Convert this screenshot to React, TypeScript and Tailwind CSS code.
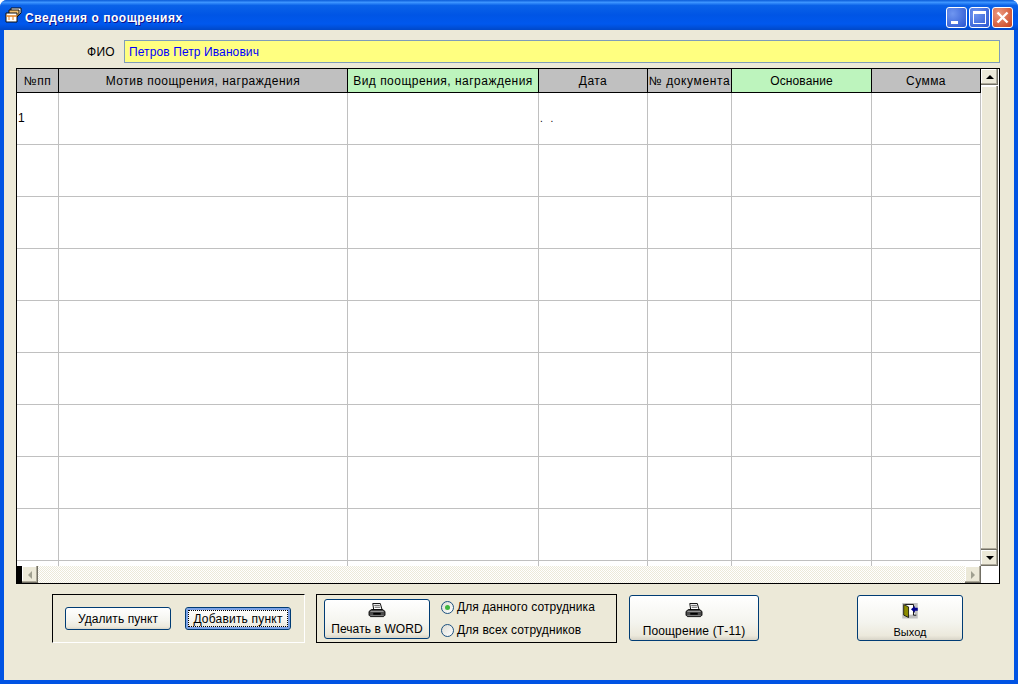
const font = { fontFamily: '"Liberation Sans", Arial, sans-serif' };

const cols = [
  { w: "w-[42px]", title: "№пп", head: "bg-[#c0c0c0]", sp: "tracking-[0.5px]" },
  { w: "w-[289px]", title: "Мотив поощрения, награждения", head: "bg-[#c0c0c0]", sp: "tracking-[0.5px]" },
  { w: "w-[191px]", title: "Вид поощрения, награждения", head: "bg-[#bdf4bd]", sp: "tracking-[0.48px]" },
  { w: "w-[109px]", title: "Дата", head: "bg-[#c0c0c0]", sp: "tracking-[0.45px]" },
  { w: "w-[84px]", title: "№ документа", head: "bg-[#c0c0c0]", sp: "tracking-[0.62px]" },
  { w: "w-[140px]", title: "Основание", head: "bg-[#bdf4bd]", sp: "tracking-[0.1px]" },
  { w: "w-[109px]", title: "Сумма", head: "bg-[#c0c0c0]", sp: "tracking-[0.45px]" },
];

const rows = [52, 52, 52, 52, 52, 52, 52, 52, 52];

function Printer() {
  return (
    <svg width="18" height="16" viewBox="0 0 18 16">
      <path d="M4.5 0.5h8l2 7h-9z" fill="#fff" stroke="#000" strokeWidth="1" />
      <path d="M6 2.5h6M6.5 4.5h6" stroke="#555" strokeWidth="1" />
      <path d="M3 7h12l2.5 2v4l-1.5 1.5H2L0.5 13V9z" fill="#4a4a4a" stroke="#000" strokeWidth="1" />
      <path d="M2 9h14" stroke="#a0a0a0" strokeWidth="1" />
      <rect x="5" y="10.5" width="8" height="2" fill="#000" />
      <path d="M2 13.5h14" stroke="#8a8a8a" strokeWidth="1" />
    </svg>
  );
}

function Door() {
  return (
    <svg width="16" height="16" viewBox="0 0 16 16">
      <rect width="16" height="16" fill="#c0c0c0" />
      <path d="M3 1.5h8.5v11h3" fill="#fff" stroke="#000" strokeWidth="1" />
      <rect x="3" y="2" width="8" height="10" fill="#fff" />
      <path d="M1.5 1.5l5 2.5v11l-5-2.5z" fill="#8c8c00" stroke="#000" strokeWidth="0.8" />
      <path d="M9 6.5l4-3.5v2h3v3h-3v2z" fill="#00008b" />
    </svg>
  );
}

function TitleIcon() {
  return (
    <svg width="18" height="18" viewBox="0 0 18 18" className="mt-[-3px] shrink-0">
      <path d="M6 1h10v5l-2 2H6z" fill="#fff" stroke="#111" strokeWidth="1" />
      <path d="M4 3h10v5l-2 2H4z" fill="#f0c070" stroke="#111" strokeWidth="1" />
      <path d="M1 6h11v9H1z" fill="#fff" stroke="#111" strokeWidth="1" />
      <path d="M1 9h11" stroke="#e08020" strokeWidth="1.5" />
      <path d="M4 9v4M8 9v4" stroke="#e08020" strokeWidth="1" />
    </svg>
  );
}

function Arrow({ dir, color = "#000" }: { dir: "up" | "down" | "left" | "right"; color?: string }) {
  const d = { up: "M4 0l4 4H0z", down: "M0 0h8L4 4z", left: "M4 0v8L0 4z", right: "M0 0l4 4-4 4z" }[dir];
  const box = dir === "up" || dir === "down" ? [8, 4] : [4, 8];
  return (
    <svg width={box[0]} height={box[1]} viewBox={`0 0 ${box[0]} ${box[1]}`}>
      <path d={d} fill={color} />
    </svg>
  );
}

function ScrollBtn({ children, className = "" }: { children: React.ReactNode; className?: string }) {
  return (
    <div
      className={`flex items-center justify-center bg-[#ece9d8] shadow-[inset_-1px_-1px_0_#716f64,inset_-2px_-2px_0_#aca899,inset_1px_1px_0_#fff] ${className}`}
    >
      {children}
    </div>
  );
}

function XpButton({
  children,
  className = "",
  focus = false,
}: {
  children: React.ReactNode;
  className?: string;
  focus?: boolean;
}) {
  return (
    <div
      className={`relative flex flex-col items-center rounded-[3px] border border-[#003c74] bg-[linear-gradient(180deg,#ffffff_0%,#f4f4ee_60%,#ece9dc_90%,#d8d4c8_100%)] text-black ${
        focus ? "shadow-[inset_0_0_0_2px_#7ba2e7]" : ""
      } ${className}`}
    >
      {children}
      {focus && <div className="absolute inset-[2px] border border-dotted border-black" />}
    </div>
  );
}

function Radio({ checked }: { checked?: boolean }) {
  return (
    <div className="flex h-[13px] w-[13px] shrink-0 items-center justify-center rounded-full border border-[#1c5180] bg-[linear-gradient(135deg,#dcdcd4,#ffffff)]">
      {checked && <div className="h-[5px] w-[5px] rounded-full bg-[#3fb53f]" />}
    </div>
  );
}

export default function App() {
  return (
    <div className="h-[684px] w-[1018px] overflow-hidden bg-white" style={font}>
      <div className="flex h-full w-full flex-col overflow-hidden rounded-t-[7px] bg-[#0053e3]">
        {/* title bar */}
        <div className="flex h-[30px] shrink-0 items-center bg-[linear-gradient(180deg,#0a5bd8_0%,#3d95ff_8%,#0a62e8_18%,#0055e5_50%,#0058ee_80%,#0048c8_100%)] pl-[5px] pr-[5px] pt-[4px]">
          <TitleIcon />
          <span className="ml-[2px] mt-[2px] text-[12px] font-bold tracking-[0.52px] text-white [text-shadow:1px_1px_0_#0f1089]">
            Сведения о поощрениях
          </span>
          <div className="ml-auto flex gap-[2px]">
            <div className="relative h-[21px] w-[21px] rounded-[3px] border border-white bg-[radial-gradient(circle_at_30%_30%,#6f96f0,#2a55d0)]">
              <div className="absolute bottom-[3px] left-[4px] h-[3px] w-[7px] bg-white" />
            </div>
            <div className="flex h-[21px] w-[21px] items-center justify-center rounded-[3px] border border-white bg-[radial-gradient(circle_at_30%_30%,#6f96f0,#2a55d0)]">
              <div className="h-[13px] w-[13px] border border-t-[3px] border-white" />
            </div>
            <div className="flex h-[21px] w-[21px] items-center justify-center rounded-[3px] border border-white bg-[radial-gradient(circle_at_30%_30%,#ec9a80,#c8401c)]">
              <svg width="13" height="13" viewBox="0 0 13 13">
                <path d="M1.5 1.5l10 10M11.5 1.5l-10 10" stroke="#fff" strokeWidth="2.4" />
              </svg>
            </div>
          </div>
        </div>

        {/* client */}
        <div className="mx-[4px] mb-[4px] flex flex-1 flex-col bg-[#ece9d8] text-[12px] text-black">
          {/* FIO */}
          <div className="mt-[10px] flex h-[23px] items-center pr-[14px]">
            <div className="w-[111px] text-right text-[12px] tracking-[0.3px]">ФИО</div>
            <div className="ml-[9px] flex h-[23px] flex-1 items-center border border-[#7f9db9] bg-[#ffff80] pl-[4px] tracking-[0.1px] text-[#0000ff]">
              Петров Петр Иванович
            </div>
          </div>

          {/* table */}
          <div className="ml-[12px] mt-[5px] flex h-[516px] w-[984px] flex-col border border-black">
            <div className="flex min-h-0 flex-1">
              <div className="flex w-[964px] flex-col">
                <div className="flex h-[24px] shrink-0 border-b-[1px] border-black">
                  {cols.map((c) => (
                    <div
                      key={c.title}
                      className={`flex items-center justify-center overflow-hidden whitespace-nowrap border-r border-black pt-[1px] ${c.w} ${c.head} ${c.sp}`}
                    >
                      {c.title}
                    </div>
                  ))}
                </div>
                <div className="flex-1 overflow-hidden bg-white">
                  {rows.map((h, i) => (
                    <div key={i} className="flex h-[52px] border-b border-[#c0c0c0]">
                      {cols.map((c, j) => (
                        <div key={c.title} className={`relative border-r border-[#c0c0c0] ${c.w}`}>
                          {i === 0 && j === 0 && <span className="absolute left-[1px] top-[16px]">1</span>}
                          {i === 0 && j === 3 && (
                            <span className="absolute left-[1px] top-[18px] text-[10px] tracking-[2.5px] text-black">. .</span>
                          )}
                        </div>
                      ))}
                    </div>
                  ))}
                  <div className="flex h-[5px]">
                    {cols.map((c) => (
                      <div key={c.title} className={`border-r border-[#c0c0c0] ${c.w}`} />
                    ))}
                  </div>
                </div>
              </div>
              {/* vertical scrollbar */}
              <div className="flex w-[18px] flex-col bg-white pr-[1px]">
                <ScrollBtn className="h-[16px] w-[17px] shrink-0">
                  <Arrow dir="up" />
                </ScrollBtn>
                <ScrollBtn className="mt-[1px] w-[17px] flex-1">{null}</ScrollBtn>
                <ScrollBtn className="h-[16px] w-[17px] shrink-0">
                  <Arrow dir="down" />
                </ScrollBtn>
              </div>
            </div>
            {/* horizontal scrollbar */}
            <div className="flex h-[17px] shrink-0">
              <div className="w-[5px] bg-black" />
              <ScrollBtn className="h-[17px] w-[16px] shrink-0">
                <Arrow dir="left" color="#a0a090" />
              </ScrollBtn>
              <div className="flex-1 bg-[repeating-conic-gradient(#ffffff_0_25%,#ece9d8_0_50%)] bg-[length:2px_2px]" />
              <ScrollBtn className="h-[17px] w-[16px] shrink-0">
                <Arrow dir="right" color="#a0a090" />
              </ScrollBtn>
              <div className="w-[18px] bg-white" />
            </div>
          </div>

          {/* bottom bar */}
          <div className="flex items-start">
            <div className="ml-[48px] mt-[10px] flex h-[49px] w-[253px] items-center gap-[14px] border border-b-white border-l-black border-r-white border-t-black pl-[12px]">
              <XpButton className="h-[23px] w-[106px] justify-center">
                <span className="tracking-[0.07px]">Удалить пункт</span>
              </XpButton>
              <XpButton focus className="h-[23px] w-[106px] justify-center">
                <span className="tracking-[0.2px]">Добавить пункт</span>
              </XpButton>
            </div>
            <div className="ml-[11px] mt-[10px] flex h-[49px] w-[301px] items-center border border-black pl-[7px]">
              <XpButton className="mt-[1px] h-[40px] w-[106px] pt-[3px]">
                <Printer />
                <span className="mt-[2px] tracking-[0.1px]">Печать в WORD</span>
              </XpButton>
              <div className="ml-[11px] flex flex-col gap-[5px] text-[12px] tracking-[0.12px]">
                <div className="flex items-center gap-[3px]">
                  <Radio checked />
                  <span>Для данного сотрудника</span>
                </div>
                <div className="flex items-center gap-[3px]">
                  <Radio />
                  <span>Для всех сотрудников</span>
                </div>
              </div>
            </div>
            <XpButton className="ml-[12px] mt-[11px] h-[46px] w-[130px] pt-[7px]">
              <Printer />
              <span className="mt-[4px] tracking-[0.15px]">Поощрение (Т-11)</span>
            </XpButton>
            <XpButton className="ml-[98px] mt-[11px] h-[46px] w-[106px] pt-[7px] text-[11px]">
              <Door />
              <span className="mt-[5px]">Выход</span>
            </XpButton>
          </div>
        </div>
      </div>
    </div>
  );
}
